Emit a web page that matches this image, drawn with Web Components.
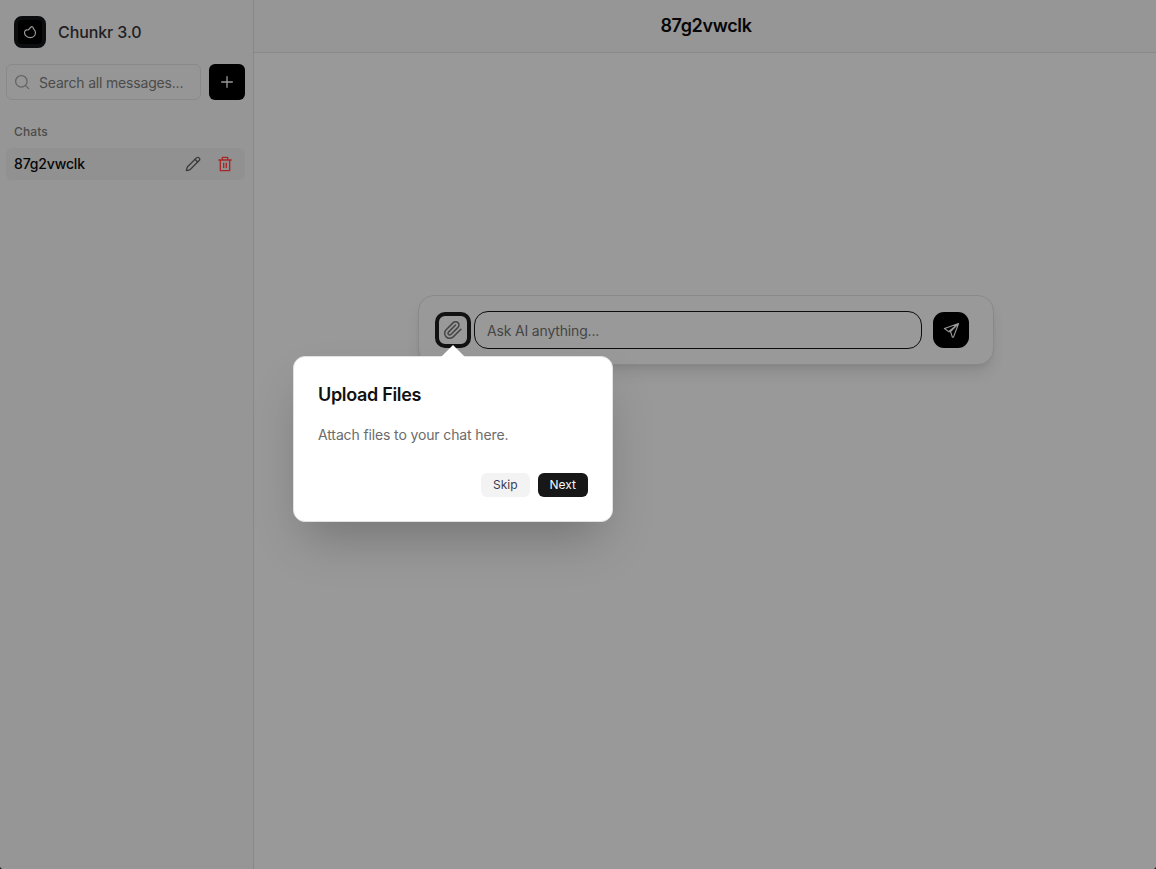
<!DOCTYPE html>
<html lang="en">
<head>
<meta charset="utf-8">
<title>Chunkr 3.0</title>
<style>
html,body{margin:0;height:100%;overflow:hidden}
body{font-family:Inter,"Liberation Sans",sans-serif;font-size:14px;background:#999}
</style>
</head>
<body>
<chat-app></chat-app>
<script>
const define = (name, html) => {
  const t = document.createElement('template');
  t.innerHTML = html;
  customElements.define(name, class extends HTMLElement {
    constructor() {
      super();
      this.attachShadow({ mode: 'open' }).append(t.content.cloneNode(true));
    }
  });
};

const icons = {
  search: '<circle cx="11" cy="11" r="8.6"/><path d="m22 22-4.6-4.6"/>',
  plus: '<path d="M4 12h16M12 4v16"/>',
  pencil: '<path d="M21.174 6.812a1 1 0 0 0-3.986-3.987L3.842 16.174a2 2 0 0 0-.5.83l-1.321 4.352a.5.5 0 0 0 .623.622l4.353-1.32a2 2 0 0 0 .83-.497z"/><path d="m15 5 4 4"/>',
  trash: '<path fill="currentColor" stroke="none" d="M17 5H22V7H20V22C20 22.55 19.55 23 19 23H5C4.45 23 4 22.55 4 22V7H2V5H7V2C7 1.45 7.45 1 8 1H16C16.55 1 17 1.45 17 2V5ZM18 7H6V21H18V7ZM9 10H11V18H9V10ZM13 10H15V18H13V10ZM9 3V5H15V3H9Z"/>',
  clip: '<path d="m21.44 11.05-9.19 9.19a6 6 0 0 1-8.49-8.49l8.57-8.57A4 4 0 1 1 18 8.84l-8.59 8.57a2 2 0 0 1-2.83-2.83l8.49-8.48"/>',
  send: '<path d="M22 2.2 2 9.2 8 13.6 10.6 13.4 13.2 21.4 14.8 21.4ZM22 2.2 8 13.6M22 2.2 10.6 13.4"/>',
  blob: '<path d="M14.2 3.2C16.1 2.2 17.3 3.6 17.5 5.4C17.7 7.4 21.4 8.6 21.4 13C21.4 18 17.6 21.6 12.6 21.6C7 21.6 2.6 17.7 2.6 13.2C2.6 9.8 4.8 8 7.6 8.6C10.8 9 10.9 5 14.2 3.2Z"/>'
};
customElements.define('ui-icon', class extends HTMLElement {
  connectedCallback() {
    if (this.shadowRoot) return;
    this.attachShadow({ mode: 'open' }).innerHTML = `<style>
      :host{display:block;flex:none;width:var(--size,16px);height:var(--size,16px)}
      svg{display:block;width:100%;height:100%;fill:none;stroke:currentColor;stroke-width:var(--stroke,2);stroke-linecap:round;stroke-linejoin:round}
      </style><svg viewBox="0 0 24 24">${icons[this.getAttribute('name')]}</svg>`;
  }
});

define('app-logo', `<style>
:host{box-sizing:border-box;display:flex;align-items:center;justify-content:center;width:32px;height:32px;border:4px solid #0c0d0f;border-radius:8px;background:#000;color:#999;--size:14px;--stroke:2}
</style><ui-icon name="blob"></ui-icon>`);

define('search-box', `<style>
:host{box-sizing:border-box;display:flex;align-items:center;flex:1;height:36px;padding:0 8px 0 7px;border:1px solid #898989;border-radius:6px;color:#646464;--stroke:1.9}
span{margin-left:9px;color:#4b4b4b;font-size:14px;line-height:20px;padding-top:1px;white-space:nowrap;letter-spacing:-.18px}
</style><ui-icon name="search"></ui-icon><span><slot></slot></span>`);

define('new-chat', `<style>
:host{display:flex;align-items:center;justify-content:center;width:36px;height:36px;border-radius:6px;background:#000;color:#999;--stroke:2}
</style><ui-icon name="plus"></ui-icon>`);

define('chat-row', `<style>
:host{box-sizing:border-box;display:flex;align-items:center;height:32px;padding:0 12px 0 8px;border-radius:6px;background:#919191;color:#060606}
span{flex:1;font-size:14px;font-weight:500;line-height:20px;letter-spacing:-.15px}
.edit{color:#3b3b3b;margin-right:16px}.del{color:#a82828}
</style><span><slot></slot></span><ui-icon class="edit" name="pencil"></ui-icon><ui-icon class="del" name="trash"></ui-icon>`);

define('side-bar', `<style>
:host{box-sizing:border-box;display:block;width:254px;padding:16px 8px 0 6px;border-right:1px solid #888;background:#969696}
.brand{display:flex;align-items:center;gap:12px;padding-left:8px;height:32px;font-size:16px;font-weight:500;color:#1f2023;letter-spacing:-.1px}
.tools{display:flex;gap:8px;margin-top:16px}
.label{padding-left:8px;margin:23px 0 8px;font-size:12px;font-weight:450;line-height:17px;color:#4b4b4b;letter-spacing:.1px}
</style>
<div class="brand"><app-logo></app-logo><span>Chunkr 3.0</span></div>
<div class="tools"><search-box>Search all messages...</search-box><new-chat></new-chat></div>
<div class="label">Chats</div>
<chat-row>87g2vwclk</chat-row>`);

define('prompt-bar', `<style>
:host{box-sizing:border-box;display:flex;align-items:center;width:576px;height:70px;padding:0 24px 0 16px;border:1px solid #898989;border-radius:16px;background:#999;box-shadow:0 10px 15px -3px #0000001a,0 4px 6px -4px #0000001a}
.attach{box-sizing:border-box;display:flex;align-items:center;justify-content:center;width:36px;height:36px;border:4px solid #121212;border-radius:10px;color:#444;--size:20px;--stroke:1.8;position:relative}
.input{box-sizing:border-box;flex:1;height:38px;margin:0 11px 0 3px;padding:0 12px;border:1px solid #0c0c0c;border-radius:14px;font-size:14px;line-height:38px;color:#454545;letter-spacing:-.17px}
.send{display:flex;align-items:center;justify-content:center;width:36px;height:36px;border-radius:11px;background:#000;color:#999;--size:17px;--stroke:1.6}
</style>
<div class="attach"><ui-icon name="clip"></ui-icon><slot name="tour"></slot></div>
<div class="input"><slot></slot></div>
<div class="send"><ui-icon name="send"></ui-icon></div>`);

define('tour-button', `<style>
:host{display:block;height:24px;padding:0 12px;border-radius:6px;background:#f3f3f3;color:#3c3c50;font-size:12px;line-height:24px}
:host([primary]){background:#171717;color:#fafafa}
</style><slot></slot>`);

define('tour-popover', `<style>
:host{box-sizing:border-box;display:block;position:absolute;z-index:2;top:40px;left:-146px;width:320px;height:166px;padding:24px;border:1px solid #e2e2e5;border-radius:12px;background:#fff;box-shadow:0 25px 50px -12px #00000040}
.arrow{position:absolute;left:147px;top:-12px;width:24px;height:12px;background:#fff;clip-path:polygon(50% 0,100% 100%,0 100%)}
h2{margin:0;font-size:18px;font-weight:600;line-height:28px;letter-spacing:-.32px;color:#111}
p{margin:15px 0 0;font-size:14px;line-height:22px;color:#6b6b6b;letter-spacing:-.13px}
.actions{display:flex;justify-content:flex-end;gap:8px;margin-top:27px}
</style><div class="arrow"></div>
<h2><slot name="title"></slot></h2><p><slot></slot></p>
<div class="actions"><tour-button>Skip</tour-button><tour-button primary>Next</tour-button></div>`);

define('chat-app', `<style>
:host{display:flex;width:100%;height:100vh;position:relative}
side-bar{flex:none}
main{flex:1;display:flex;flex-direction:column;background:#999}
header{box-sizing:border-box;height:53px;padding-left:2px;border-bottom:1px solid #898989;background:#969696;text-align:center;font-size:18px;font-weight:600;line-height:52px;color:#060606;letter-spacing:-.35px}
.body{display:flex;justify-content:center;padding:242px 0 0 2px}
.corner{position:absolute;bottom:0;width:2px;height:2px;background:#222}
.l{left:0;clip-path:polygon(0 0,100% 100%,0 100%)}.r{right:0;clip-path:polygon(100% 0,100% 100%,0 100%)}
</style>
<side-bar></side-bar>
<main><header>87g2vwclk</header>
<div class="body"><prompt-bar>Ask AI anything...<tour-popover slot="tour"><span slot="title">Upload Files</span>Attach files to your chat here.</tour-popover></prompt-bar></div></main>
<i class="corner l"></i><i class="corner r"></i>`);
</script>
</body>
</html>
